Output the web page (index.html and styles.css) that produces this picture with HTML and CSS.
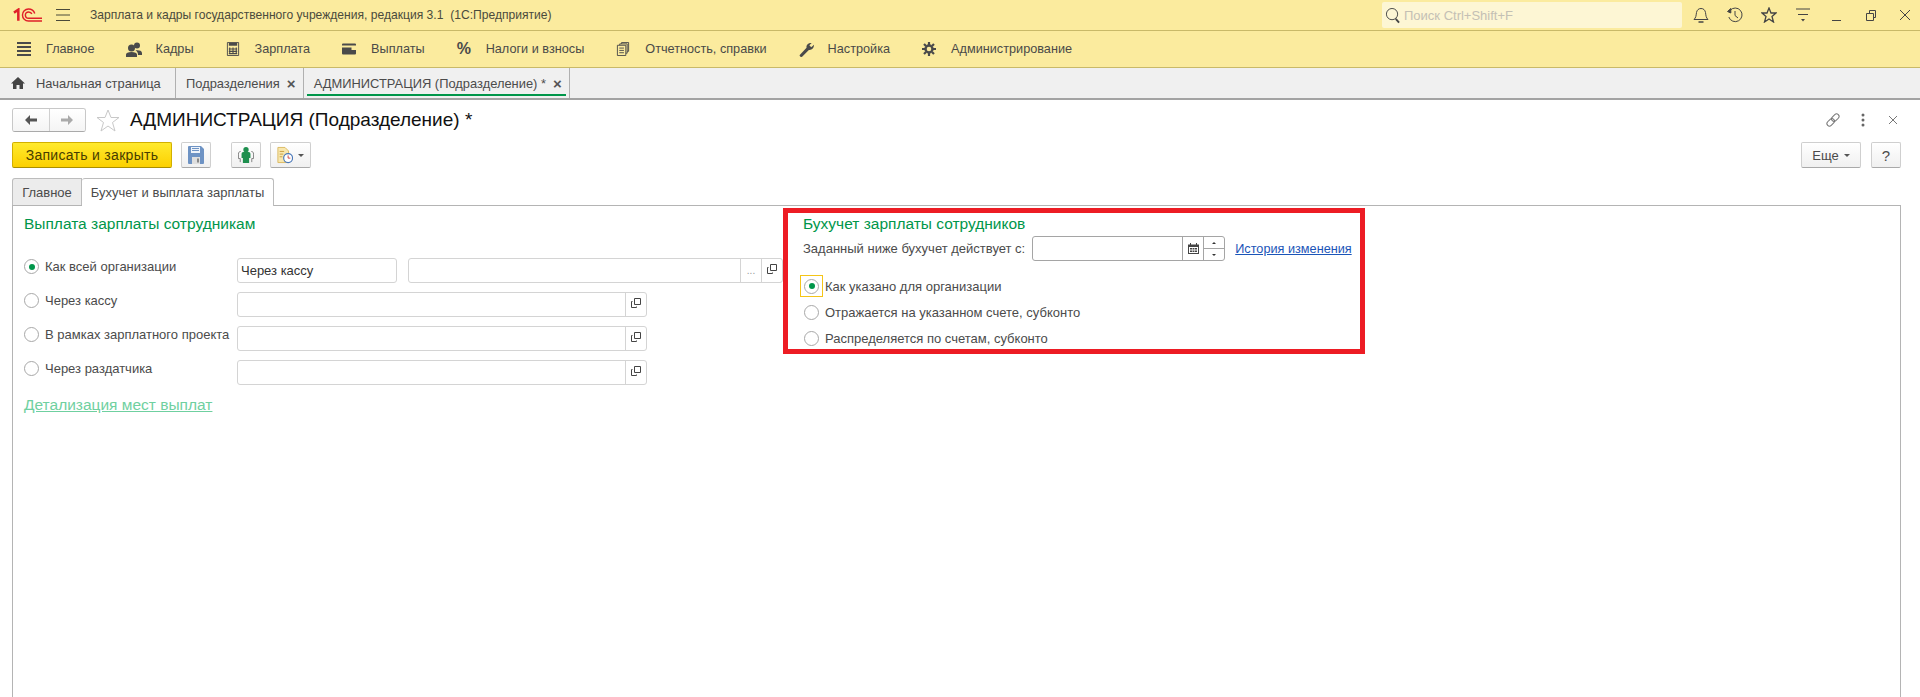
FILE: index.html
```html
<!DOCTYPE html>
<html lang="ru">
<head>
    <meta charset="UTF-8">
    <title>Зарплата и кадры государственного учреждения</title>
    <link rel="stylesheet" href="styles.css">
</head>
<body>
    <header class="titlebar">
        <svg class="logo" viewBox="0 0 30 14" fill="none" stroke="#e0202a">
            <path d="M1 4.500 5.500 1.500V13" stroke-width="2.600"/>
            <path d="M22.500 5.500C21.500 2.500 19 .8 16 .8 12.500 .8 9.800 3.500 9.800 7s2.700 6.200 6.200 6.200H30" stroke-width="1.500"/>
            <path d="M19.500 6C19 4.500 17.500 3.800 16.200 3.800 14.200 3.800 12.800 5.200 12.800 7s1.400 3.400 3.400 3.400H30" stroke-width="1.500"/>
        </svg>
        <svg class="burger" viewBox="0 0 14 12" stroke="#4a4a3a"><path d="M0 .5H14M0 6H14M0 11.500H14"/></svg>
        <div class="app-title">Зарплата и кадры государственного учреждения, редакция 3.1&nbsp; (1С:Предприятие)</div>
        <div class="search">
            <svg viewBox="0 0 16 18" fill="none" stroke="#444"><circle cx="7.500" cy="7.500" r="6"/><path d="M11.500 12.500 15 16.500" stroke-width="2"/></svg>
            <span>Поиск Ctrl+Shift+F</span>
        </div>
        <div class="window-tools">
            <svg viewBox="0 0 16 16" fill="none" stroke="#444"><path d="M1 12.500H15C13 10.500 13 9 12.500 5.500 12 3 10.500 1.500 8 1.500S4 3 3.500 5.500C3 9 3 10.500 1 12.500Z"/><path d="M5.500 15H10.500" stroke-width="1.500"/></svg>
            <svg viewBox="0 0 16 16" fill="none" stroke="#444"><path d="M3 3.500A6.800 6.800 0 1 1 1.800 10M8 4V8.500L11 11"/><path d="M.5 4.500 3.800 1.500V6Z" fill="#444"/></svg>
            <svg viewBox="0 0 16 16" fill="none" stroke="#444" stroke-width="1.300"><path d="M8 1 10 6H15L11 9.500 12.500 15 8 12 3.500 15 5 9.500 1 6H6Z"/></svg>
            <svg viewBox="0 0 16 16" fill="#444" stroke="#444"><path d="M1 2H15M3 7.500H13" fill="none"/><path d="M6 12H10L8 14.500Z" stroke="none"/></svg>
            <svg viewBox="0 0 16 16" stroke="#444"><path d="M3 13.500H12"/></svg>
            <svg viewBox="0 0 16 16" fill="none" stroke="#444"><path d="M3.500 6.500H10.500V13.500H3.500ZM6.500 6.500V3.500H12.500V10.500H10.500"/></svg>
            <svg viewBox="0 0 16 16" stroke="#444"><path d="M3 3 13 13M13 3 3 13"/></svg>
        </div>
    </header>

    <nav class="sections">
        <a class="section-link">
            <svg viewBox="0 0 14 14" stroke="#4a4a4a" stroke-width="2"><path d="M0 1H14M0 5H14M0 9H14M0 13H14"/></svg>
            Главное
        </a>
        <a class="section-link">
            <svg class="icon-wide" viewBox="0 0 16 15" fill="#4a4a4a"><circle cx="5.500" cy="6" r="3.500"/><circle cx="11" cy="3.500" r="3"/><path d="M0 15V12.500C0 11 2 10 5.500 10S11 11 11 12.500V15ZM9.500 8.500C12 8 16 8.500 16 11V13H12C12 11 11.500 9.500 9.500 8.500Z"/></svg>
            Кадры
        </a>
        <a class="section-link">
            <svg viewBox="0 0 13 15" fill="none" stroke="#4a4a4a"><path d="M.5.500H12.500V14.500H.5Z"/><path d="M2 2.500H11" stroke-width="3"/><path d="M3 6V13M6.500 6V13M10 6V13M2 7.500H11M2 10H11M2 12.500H11" stroke-width="1.200"/></svg>
            Зарплата
        </a>
        <a class="section-link">
            <svg viewBox="0 0 14 11" fill="#4a4a4a"><path d="M0 1Q0 0 1 0H13Q14 0 14 1V2H0ZM0 4H9.500V6.500H14V10Q14 11 13 11H1Q0 11 0 10Z"/></svg>
            Выплаты
        </a>
        <a class="section-link">
            <span class="percent">%</span>
            Налоги и взносы
        </a>
        <a class="section-link">
            <svg viewBox="0 0 13 15" fill="none" stroke="#4a4a4a"><path d="M.5 3.500H9.500V14.500H.5ZM3 3.500V2H11V12H9.500M5 2V.5H12.500V10H11M2.500 6.500H7.500M2.500 9H7.500M2.500 11.500H7.500"/></svg>
            Отчетность, справки
        </a>
        <a class="section-link">
            <svg class="icon-wide" viewBox="0 0 16 16" fill="#4a4a4a"><path d="M0 14 7.500 6C7 3 9.500 .5 13 1L10.500 3.500 12.500 5.500 15.500 3C15.500 6.500 13 9 10 8.500L2.500 16Q.5 16 0 14Z"/></svg>
            Настройка
        </a>
        <a class="section-link">
            <svg viewBox="0 0 14 14" fill="none" stroke="#4a4a4a"><circle cx="7" cy="7" r="3.500" stroke-width="2.400"/><path d="M7 0V3M7 11V14M0 7H3M11 7H14M2 2 4 4M10 10 12 12M12 2 10 4M4 10 2 12" stroke-width="2.200"/></svg>
            Администрирование
        </a>
    </nav>

    <div class="tabs">
        <div class="tab tab-home">
            <svg viewBox="0 0 14 12" fill="#444"><path d="M7 0 14 6.500H12V12H8.500V8H5.500V12H2V6.500H0Z"/></svg>
            Начальная страница
        </div>
        <div class="tab">Подразделения <span class="tab-close">×</span></div>
        <div class="tab tab-current">АДМИНИСТРАЦИЯ (Подразделение) * <span class="tab-close">×</span></div>
    </div>

    <main class="page">
        <div class="page-head">
            <div class="history-nav">
                <button>
                    <svg viewBox="0 0 12 10" fill="#555"><path d="M0 5 5 0V3.500H12V6.500H5V10Z"/></svg>
                </button>
                <button>
                    <svg viewBox="0 0 12 10" fill="#aaa"><path d="M12 5 7 0V3.500H0V6.500H7V10Z"/></svg>
                </button>
            </div>
            <svg class="fav" viewBox="0 0 24 23" fill="none" stroke="#c8c8c8"><path d="M12 1 15 8.500H23L16.500 13.500 19 22 12 17 5 22 7.500 13.500 1 8.500H9Z"/></svg>
            <h1>АДМИНИСТРАЦИЯ (Подразделение) *</h1>
            <div class="page-tools">
                <svg viewBox="0 0 16 16" fill="none" stroke="#777"><rect x="0.500" y="5.500" width="8.500" height="5" rx="2.500" transform="rotate(-45 8 8)"/><rect x="7" y="5.500" width="8.500" height="5" rx="2.500" transform="rotate(-45 8 8)"/></svg>
                <svg viewBox="0 0 16 16" fill="#666"><circle cx="8" cy="3" r="1.500"/><circle cx="8" cy="8" r="1.500"/><circle cx="8" cy="13" r="1.500"/></svg>
                <svg viewBox="0 0 16 16" stroke="#777"><path d="M4 4 12 12M12 4 4 12"/></svg>
            </div>
        </div>

        <div class="commandbar">
            <button class="btn btn-primary">Записать и закрыть</button>
            <button class="btn btn-icon">
                <svg viewBox="0 0 16 18" fill="#6e93c4"><path d="M0 1Q0 0 1 0H13L16 3V17Q16 18 15 18H1Q0 18 0 17Z"/><path d="M3 1H12V7H3Z" fill="#eef3fa"/><path d="M4 2.500H11M4 4.500H11" stroke="#6e93c4"/><path d="M4 11H12V18H4Z" fill="#dfdfdf"/><path d="M9 12.500H11V16.500H9Z" fill="#888"/></svg>
            </button>
            <button class="btn btn-icon btn-gap">
                <svg viewBox="0 0 18 18" fill="none"><path d="M3 5C1.500 5 .5 6 .5 8V13H2.500V17M15 5C16.500 5 17.500 6 17.500 8V13H15.500V17" stroke="#777"/><circle cx="9" cy="3" r="3" fill="#1e8f4e"/><path d="M4 7.500Q4 5.500 6 5.500H12Q14 5.500 14 7.500V12.500H12.500V18H5.500V12.500H4Z" fill="#1e8f4e"/></svg>
            </button>
            <button class="btn btn-report">
                <svg viewBox="0 0 18 18" fill="none"><path d="M1 .5H9L13 4.500V17.500H1Z" fill="#f8e7ae" stroke="#d9b65a"/><path d="M3 5H8M3 8H7M3 11H6" stroke="#c79a3a"/><circle cx="12.500" cy="12.500" r="5" fill="#fff" stroke="#4a78b8" stroke-width="1.300"/><path d="M12.500 9.500V12.500H15" stroke="#c33"/></svg>
                <i class="caret"></i>
            </button>
            <div class="commandbar-right">
                <button class="btn btn-more">Еще <i class="caret"></i></button>
                <button class="btn btn-help">?</button>
            </div>
        </div>

        <div class="form-tabs">
            <div class="form-tab">Главное</div>
            <div class="form-tab form-tab-active">Бухучет и выплата зарплаты</div>
        </div>

        <div class="form-body">
            <section class="payments">
                <h2>Выплата зарплаты сотрудникам</h2>
                <div class="payment-rows">
                    <div class="payment-row">
                        <label class="choice"><i class="radio checked"></i>Как всей организации</label>
                        <div class="field field-short">Через кассу</div>
                        <div class="field field-long">
                            <span class="field-value"></span>
                            <span class="field-btn dots">...</span>
                            <span class="field-btn"><svg class="open-icon" viewBox="0 0 10 10" fill="none" stroke="#444"><path d="M3.500.5H9.500V6.500H3.500ZM1.500 3.500H.5V9.500H5.500V8.500"/></svg></span>
                        </div>
                    </div>
                    <div class="payment-row">
                        <label class="choice"><i class="radio"></i>Через кассу</label>
                        <div class="field field-mid">
                            <span class="field-value"></span>
                            <span class="field-btn"><svg class="open-icon" viewBox="0 0 10 10" fill="none" stroke="#444"><path d="M3.500.5H9.500V6.500H3.500ZM1.500 3.500H.5V9.500H5.500V8.500"/></svg></span>
                        </div>
                    </div>
                    <div class="payment-row">
                        <label class="choice"><i class="radio"></i>В рамках зарплатного проекта</label>
                        <div class="field field-mid">
                            <span class="field-value"></span>
                            <span class="field-btn"><svg class="open-icon" viewBox="0 0 10 10" fill="none" stroke="#444"><path d="M3.500.5H9.500V6.500H3.500ZM1.500 3.500H.5V9.500H5.500V8.500"/></svg></span>
                        </div>
                    </div>
                    <div class="payment-row">
                        <label class="choice"><i class="radio"></i>Через раздатчика</label>
                        <div class="field field-mid">
                            <span class="field-value"></span>
                            <span class="field-btn"><svg class="open-icon" viewBox="0 0 10 10" fill="none" stroke="#444"><path d="M3.500.5H9.500V6.500H3.500ZM1.500 3.500H.5V9.500H5.500V8.500"/></svg></span>
                        </div>
                    </div>
                </div>
                <a class="details-link">Детализация мест выплат</a>
            </section>

            <section class="accounting">
                <h2>Бухучет зарплаты сотрудников</h2>
                <div class="date-row">
                    <span>Заданный ниже бухучет действует с:</span>
                    <div class="date-field">
                        <span class="field-value"></span>
                        <span class="date-btn">
                            <svg viewBox="0 0 11 11" fill="#444"><path d="M0 1.500H2V0H3V1.500H8V0H9V1.500H11V11H0ZM1 4V10H10V4Z"/><path d="M2 5H4V6.500H2ZM4.500 5H6.500V6.500H4.500ZM7 5H9V6.500H7ZM2 7.500H4V9H2ZM4.500 7.500H6.500V9H4.500ZM7 7.500H9V9H7Z"/></svg>
                        </span>
                        <span class="spin"><i class="spin-up"></i><i class="spin-down"></i></span>
                    </div>
                    <a class="history-link">История изменения</a>
                </div>
                <div class="account-choices">
                    <label class="account-choice"><span class="radio-wrap focused"><i class="radio checked"></i></span>Как указано для организации</label>
                    <label class="account-choice"><span class="radio-wrap"><i class="radio"></i></span>Отражается на указанном счете, субконто</label>
                    <label class="account-choice"><span class="radio-wrap"><i class="radio"></i></span>Распределяется по счетам, субконто</label>
                </div>
            </section>
        </div>
    </main>
</body>
</html>
```

FILE: styles.css
```css
* {
    box-sizing: border-box;
}
html, body {
    height: 100%;
}
body {
    margin: 0;
    overflow: hidden;
    display: flex;
    flex-direction: column;
    font-family: "Liberation Sans", Arial, sans-serif;
    font-size: 13px;
    color: #4b4b4b;
    background: #fff;
}
svg {
    display: block;
    flex: none;
}
button {
    font: inherit;
    color: inherit;
    padding: 0;
}

/* top yellow bars */
.titlebar {
    height: 31px;
    flex: none;
    display: flex;
    align-items: center;
    background: #fbeb9e;
    border-bottom: 1px solid #c9b968;
    padding-left: 13px;
}
.logo {
    width: 29px;
    height: 14px;
}
.burger {
    width: 14px;
    height: 12px;
    margin-left: 14px;
}
.app-title {
    margin-left: 20px;
    font-size: 12.100px;
    color: #4a4a3c;
}
.search {
    margin-left: auto;
    width: 300px;
    height: 26px;
    display: flex;
    align-items: center;
    gap: 4px;
    padding-left: 3px;
    background: #fdf6d4;
    border-radius: 2px;
    color: #c4c0b4;
}
.search svg {
    width: 15px;
    height: 17px;
}
.window-tools {
    display: flex;
    gap: 18px;
    margin-left: 11px;
    margin-right: 7px;
}
.window-tools svg {
    width: 16px;
    height: 16px;
}
.sections {
    height: 37px;
    flex: none;
    display: flex;
    align-items: center;
    gap: 32px;
    padding-left: 17px;
    background: #fbeb9e;
    border-bottom: 1px solid #c9b968;
    font-size: 12.700px;
}
.section-link {
    display: flex;
    align-items: center;
    gap: 15px;
    color: #4a4a48;
}
.section-link svg {
    width: 14px;
    height: 14px;
}
.section-link .icon-wide {
    width: 16px;
    height: 15px;
    margin-right: -2px;
}
.percent {
    width: 14px;
    font-size: 16px;
    font-weight: bold;
    color: #4a4a4a;
}

/* open windows */
.tabs {
    height: 32px;
    flex: none;
    display: flex;
    background: #f0f0f0;
    border-bottom: 2px solid #a3a3a3;
    font-size: 12.900px;
}
.tab {
    display: flex;
    align-items: center;
    padding: 0 7px 0 10px;
    border-right: 1px solid #b0b0b0;
    position: relative;
}
.tab-home {
    width: 176px;
    padding-left: 11px;
    gap: 11px;
}
.tab-home svg {
    width: 14px;
    height: 12px;
}
.tab-close {
    width: 9px;
    font-size: 15px;
    font-weight: bold;
    color: #555;
    margin-left: 7px;
}
.tab-current::after {
    content: "";
    position: absolute;
    left: 3px;
    right: 3px;
    bottom: 2px;
    height: 2px;
    background: #00964a;
}

/* page */
.page {
    flex: 1;
    display: flex;
    flex-direction: column;
    background: #fff;
    padding: 8px 19px 0 12px;
    min-height: 0;
}
.page-head {
    display: flex;
    align-items: center;
    height: 24px;
}
.history-nav {
    display: flex;
    width: 74px;
    height: 24px;
    border: 1px solid #c8c8c8;
    border-bottom-color: #aaa;
    border-radius: 3px;
    overflow: hidden;
}
.history-nav button {
    flex: 1;
    border: 0;
    background: linear-gradient(#fff, #f4f4f4);
    display: flex;
    align-items: center;
    justify-content: center;
}
.history-nav button + button {
    border-left: 1px solid #d0d0d0;
}
.history-nav svg {
    width: 12px;
    height: 10px;
}
.fav {
    width: 24px;
    height: 23px;
    margin-left: 10px;
}
h1 {
    margin: 0 0 0 10px;
    font-size: 19px;
    font-weight: normal;
    color: #111;
}
.page-tools {
    margin-left: auto;
    display: flex;
    gap: 14px;
}
.page-tools svg {
    width: 16px;
    height: 16px;
}
.commandbar {
    display: flex;
    margin-top: 10px;
    height: 26px;
}
.btn {
    height: 26px;
    border: 1px solid #cfcfcf;
    border-bottom-color: #a9a9a9;
    border-radius: 2px;
    background: linear-gradient(#fff, #f0f0f0);
    display: flex;
    align-items: center;
    justify-content: center;
}
.btn-primary {
    width: 160px;
    background: linear-gradient(#ffea2e, #fcd000);
    border-color: #d2b000;
    border-bottom-color: #a98e00;
    color: #473d00;
    font-size: 14px;
    letter-spacing: .3px;
}
.btn-icon {
    width: 30px;
    margin-left: 9px;
}
.btn-gap {
    margin-left: 20px;
}
.btn-icon svg, .btn-report svg {
    width: 16px;
    height: 18px;
}
.btn-report {
    width: 41px;
    margin-left: 9px;
    gap: 5px;
}
.caret {
    width: 0;
    height: 0;
    border: 3px solid transparent;
    border-top: 3px solid #555;
    border-bottom: 0;
}
.commandbar-right {
    margin-left: auto;
    display: flex;
    gap: 10px;
}
.btn-more {
    width: 60px;
    gap: 5px;
}
.btn-help {
    width: 30px;
    font-size: 15px;
}
.form-tabs {
    display: flex;
    margin-top: 10px;
    height: 28px;
    position: relative;
    margin-bottom: -1px;
}
.form-tab {
    width: 70px;
    height: 27px;
    display: flex;
    align-items: center;
    justify-content: center;
    background: #ececec;
    border: 1px solid #bcbcbc;
    border-bottom: 0;
    border-radius: 3px 0 0 0;
}
.form-tab-active {
    width: 192px;
    height: 28px;
    background: #fff;
    border-radius: 3px 3px 0 0;
    border-left: 0;
    z-index: 1;
}

/* tab contents */
.form-body {
    flex: 1;
    display: flex;
    border: 1px solid #b4b4b4;
    border-bottom: 0;
    padding-left: 11px;
}
h2 {
    margin: 0;
    font-size: 15.500px;
    line-height: 18px;
    font-weight: normal;
    color: #00964a;
}
.payments {
    width: 759px;
    padding-top: 9px;
}
.payment-rows {
    margin-top: 25px;
    display: flex;
    flex-direction: column;
    gap: 9px;
}
.payment-row {
    display: flex;
    height: 25px;
}
.choice {
    width: 213px;
    height: 17px;
    display: flex;
    align-items: center;
    gap: 6px;
    white-space: nowrap;
}
.radio {
    width: 15px;
    height: 15px;
    flex: none;
    display: flex;
    align-items: center;
    justify-content: center;
    border: 1px solid #a8a8a8;
    border-radius: 50%;
    background: #fff;
}
.radio.checked::before {
    content: "";
    width: 6px;
    height: 6px;
    border-radius: 50%;
    background: #00964a;
}
.field {
    display: flex;
    height: 25px;
    border: 1px solid #d4d4d4;
    border-radius: 3px;
    align-items: center;
    color: #333;
}
.field-short {
    width: 160px;
    padding-left: 3px;
}
.field-long {
    width: 375px;
    margin-left: 11px;
}
.field-mid {
    width: 410px;
}
.field-value {
    flex: 1;
}
.field-btn {
    width: 21px;
    height: 100%;
    border-left: 1px solid #d4d4d4;
    display: flex;
    align-items: center;
    justify-content: center;
}
.dots {
    color: #999;
    font-size: 10px;
}
.open-icon {
    width: 10px;
    height: 10px;
    margin-top: -3px;
}
.details-link {
    display: inline-block;
    margin-top: 11px;
    font-size: 15.500px;
    line-height: 18px;
    color: #6fd0a0;
    text-decoration: underline;
}
.accounting {
    width: 582px;
    height: 146px;
    margin-top: 2px;
    border: 5px solid #ed1c24;
    padding-top: 2px;
}
.accounting h2 {
    margin-left: 15px;
}
.date-row {
    display: flex;
    align-items: center;
    height: 25px;
    margin: 3px 0 0 15px;
}
.date-field {
    width: 193px;
    height: 25px;
    margin-left: 7px;
    display: flex;
    border: 1px solid #a5a5a5;
    border-radius: 3px;
}
.date-btn {
    width: 21px;
    border-left: 1px solid #a5a5a5;
    display: flex;
    align-items: center;
    justify-content: center;
}
.date-btn svg {
    width: 11px;
    height: 11px;
}
.spin {
    width: 21px;
    border-left: 1px solid #a5a5a5;
    display: flex;
    flex-direction: column;
}
.spin i {
    flex: 1;
    display: flex;
    align-items: center;
    justify-content: center;
}
.spin-down {
    border-top: 1px solid #a5a5a5;
}
.spin i::before {
    content: "";
    border-left: 2px solid transparent;
    border-right: 2px solid transparent;
}
.spin .spin-up::before {
    border-bottom: 2px solid #333;
}
.spin .spin-down::before {
    border-top: 2px solid #333;
}
.history-link {
    margin-left: 10px;
    font-size: 12.700px;
    color: #1b55b8;
    text-decoration: underline;
}
.account-choices {
    margin-top: 12px;
}
.account-choice {
    height: 26px;
    display: flex;
    align-items: center;
    gap: 2px;
    padding-left: 12px;
}
.radio-wrap {
    width: 23px;
    height: 22px;
    display: flex;
    align-items: center;
    justify-content: center;
    border: 1px solid transparent;
}
.radio-wrap.focused {
    border-color: #f5c518;
}
```
